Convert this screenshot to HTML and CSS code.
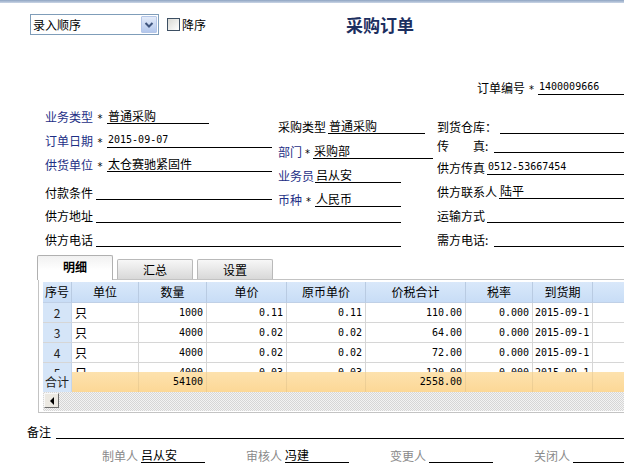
FILE: index.html
```html
<!DOCTYPE html>
<html lang="zh-CN">
<head>
<meta charset="utf-8">
<title>采购订单</title>
<link rel="stylesheet" href="styles.css">
</head>
<body>
<div class="topline"></div>

<div class="toolbar">
  <div class="combo">
    <span class="combo-text">录入顺序</span>
    <span class="combo-btn"><svg width="10" height="8" viewBox="0 0 10 8"><polyline points="1.5,2 5,5.5 8.5,2" fill="none" stroke="#3f557e" stroke-width="2"/></svg></span>
  </div>
  <div class="check"><span class="box"></span>降序</div>
  <h1 class="title">采购订单</h1>
</div>

<div class="order-row">
  <div class="field f-order"><span class="lbl">订单编号</span><span class="req">*</span><span class="val num">1400009666</span></div>
</div>

<div class="form-a">
  <div class="col col-left">
    <div class="field w164"><span class="lbl blue">业务类型</span><span class="req">*</span><span class="val">普通采购</span></div>
    <div class="field w227"><span class="lbl blue">订单日期</span><span class="req">*</span><span class="val num">2015-09-07</span></div>
    <div class="field w227"><span class="lbl blue">供货单位</span><span class="req">*</span><span class="val">太仓赛驰紧固件</span></div>
    <div class="field w227 gap-lg"><span class="lbl sp3">付款条件</span><span class="val"></span></div>
  </div>
  <div class="col col-mid">
    <div class="field w147"><span class="lbl sp2">采购类型</span><span class="val">普通采购</span></div>
    <div class="field w155 gap-md"><span class="lbl blue">部门</span><span class="req r11">*</span><span class="val">采购部</span></div>
    <div class="field w123"><span class="lbl blue sp1">业务员</span><span class="val">吕从安</span></div>
    <div class="field w123"><span class="lbl blue">币种</span><span class="req r13">*</span><span class="val">人民币</span></div>
  </div>
  <div class="col col-right">
    <div class="field w187"><span class="lbl sp3">到货仓库：</span><span class="val"></span></div>
    <div class="field w187 gap-xs"><span class="lbl lw57">传　　真:</span><span class="val"></span></div>
    <div class="field w187 gap-sm"><span class="lbl sp2">供方传真</span><span class="val num">0512-53667454</span></div>
    <div class="field w187"><span class="lbl sp2">供方联系人</span><span class="val">陆平</span></div>
  </div>
</div>

<div class="form-b">
  <div class="frow">
    <div class="field w356"><span class="lbl sp3">供方地址</span><span class="val"></span></div>
    <div class="field w187 right"><span class="lbl sp2">运输方式</span><span class="val"></span></div>
  </div>
  <div class="frow">
    <div class="field w356"><span class="lbl sp3">供方电话</span><span class="val"></span></div>
    <div class="field w187 right"><span class="lbl lw57">需方电话:</span><span class="val"></span></div>
  </div>
</div>

<div class="tabs">
  <div class="tab active">明细</div>
  <div class="tab">汇总</div>
  <div class="tab">设置</div>
</div>
<div class="panel">
  <div class="trow thead">
    <div class="c">序号</div><div class="c">单位</div><div class="c">数量</div><div class="c">单价</div><div class="c">原币单价</div><div class="c">价税合计</div><div class="c">税率</div><div class="c">到货期</div><div class="c"></div>
  </div>
  <div class="tbody">
    <div class="trow">
      <div class="c seq">2</div><div class="c l">只</div><div class="c r">1000</div><div class="c r">0.11</div><div class="c r">0.11</div><div class="c r">110.00</div><div class="c r">0.000</div><div class="c l num">2015-09-1</div><div class="c"></div>
    </div>
    <div class="trow">
      <div class="c seq">3</div><div class="c l">只</div><div class="c r">4000</div><div class="c r">0.02</div><div class="c r">0.02</div><div class="c r">64.00</div><div class="c r">0.000</div><div class="c l num">2015-09-1</div><div class="c"></div>
    </div>
    <div class="trow">
      <div class="c seq">4</div><div class="c l">只</div><div class="c r">4000</div><div class="c r">0.02</div><div class="c r">0.02</div><div class="c r">72.00</div><div class="c r">0.000</div><div class="c l num">2015-09-1</div><div class="c"></div>
    </div>
    <div class="trow">
      <div class="c seq">5</div><div class="c l">只</div><div class="c r">4000</div><div class="c r">0.03</div><div class="c r">0.03</div><div class="c r">120.00</div><div class="c r">0.000</div><div class="c l num">2015-09-1</div><div class="c"></div>
    </div>
  </div>
  <div class="trow ttotal">
    <div class="c seq">合计</div><div class="c"></div><div class="c r">54100</div><div class="c"></div><div class="c"></div><div class="c r">2558.00</div><div class="c"></div><div class="c"></div><div class="c"></div>
  </div>
  <div class="hscroll">
    <span class="arrow"><svg width="6" height="8" viewBox="0 0 6 8"><polygon points="5,0 5,8 1,4" fill="#000"/></svg></span>
  </div>
</div>

<div class="remark">
  <div class="field wfull"><span class="lbl sp5">备注</span><span class="val"></span></div>
</div>

<div class="signs">
  <div class="sign"><span class="slbl">制单人</span><span class="sval">吕从安</span></div>
  <div class="sign"><span class="slbl">审核人</span><span class="sval">冯建</span></div>
  <div class="sign"><span class="slbl">变更人</span><span class="sval"></span></div>
  <div class="sign"><span class="slbl">关闭人</span><span class="sval"></span></div>
</div>
</body>
</html>
```

FILE: styles.css
```css
* { box-sizing: border-box; }
html, body { margin: 0; }
body {
  width: 624px;
  height: 474px;
  overflow: hidden;
  background: #fff;
  color: #000;
  font: 12px "Noto Sans CJK SC", sans-serif;
}

.topline {
  height: 3px;
  background: linear-gradient(#8ea4c2, #cbd6e6);
}

/* toolbar */
.toolbar {
  display: flex;
  align-items: center;
  height: 21px;
  margin-top: 11px;
  padding-left: 30px;
}
.combo {
  display: flex;
  width: 129px;
  height: 21px;
  border: 1px solid #7f9db9;
  background: #fff;
}
.combo-text {
  flex: 1;
  padding-left: 2px;
  line-height: 19px;
}
.combo-btn {
  width: 16px;
  height: 17px;
  margin: 1px 1px 0 0;
  border: 1px solid #b4c6e8;
  border-radius: 1px;
  background: linear-gradient(#e3ebf9, #b3c7ec);
  display: flex;
  align-items: center;
  justify-content: center;
}
.check {
  display: flex;
  align-items: center;
  margin-left: 8px;
  line-height: 14px;
}
.box {
  width: 13px;
  height: 13px;
  margin-right: 2px;
  border: 1px solid #3d4f63;
  background: linear-gradient(135deg, #d9d9d4, #fff);
}
.title {
  margin: 0 0 0 140px;
  font-size: 17px;
  font-weight: bold;
  line-height: 21px;
  color: #1c2f5f;
}

/* generic underlined field */
.field {
  display: flex;
  align-items: flex-end;
  height: 15px;
  flex-shrink: 0;
}
.lbl {
  line-height: 14px;
  white-space: nowrap;
  flex-shrink: 0;
}
.blue { color: #1e2f86; }
.sp1 { margin-right: 1px; }
.sp2 { margin-right: 2px; }
.sp3 { margin-right: 3px; }
.sp5 { margin-right: 5px; }
.lw57 { width: 57px; }
.req {
  width: 14px;
  flex-shrink: 0;
  text-align: center;
  font: 10px "DejaVu Sans", sans-serif;
  line-height: 11px;
}
.r11 { width: 11px; }
.r13 { width: 13px; }
.val {
  flex: 1;
  height: 15px;
  border-bottom: 1px solid #000;
  line-height: 14px;
  padding-left: 1px;
  white-space: nowrap;
}
.num {
  font-family: "DejaVu Sans Mono", monospace;
  font-size: 10px;
}

.w123 { width: 123px; }
.w147 { width: 147px; }
.w155 { width: 155px; }
.w164 { width: 164px; }
.w187 { width: 187px; }
.w227 { width: 227px; }
.w356 { width: 356px; }

/* order number */
.order-row {
  margin-top: 45px;
  padding-left: 477px;
}
.f-order { width: 147px; }
.f-order .req { width: 13px; }

/* main form */
.form-a {
  display: flex;
  align-items: flex-start;
  margin-top: 14px;
  padding-left: 45px;
}
.col {
  display: flex;
  flex-direction: column;
  flex-shrink: 0;
}
.col-left { width: 227px; gap: 9px; }
.col-left .gap-lg { margin-top: 4px; }
.col-mid { width: 155px; margin-left: 6px; padding-top: 10px; gap: 9px; }
.col-mid .gap-md { margin-top: 1px; }
.col-right { width: 187px; margin-left: 4px; padding-top: 10px; gap: 4px; }
.col-right .gap-xs { margin-top: 0; }
.col-right .gap-sm { margin-top: 3px; }
.col-right .field:last-child { margin-top: 5px; }

.form-b {
  display: flex;
  flex-direction: column;
  gap: 9px;
  margin-top: 1px;
  padding-left: 45px;
}
.frow { display: flex; }
.frow .right { margin-left: 36px; }

/* tabs */
.tabs {
  display: flex;
  align-items: flex-end;
  gap: 4px;
  height: 24px;
  margin-top: 8px;
  padding-left: 37px;
}
.tab {
  width: 76px;
  height: 20px;
  border: 1px solid #b9b9b9;
  border-bottom: none;
  border-radius: 2px 2px 0 0;
  background: linear-gradient(#f7f7f7, #d8d8d8);
  text-align: center;
  line-height: 19px;
}
.tab.active {
  position: relative;
  z-index: 1;
  height: 25px;
  margin-bottom: -1px;
  border-color: #b0b0b0;
  background: linear-gradient(#f1f1f1, #fff 60%);
  font-weight: bold;
  line-height: 22px;
}

.panel {
  width: 640px;
  margin-left: 38px;
  padding: 2px 0 1px 4px;
  border: 1px solid #c3c3c3;
}
.trow {
  display: grid;
  grid-template-columns: 29px 67px 68px 80px 79px 100px 67px 60px 80px;
}
.c {
  height: 20px;
  border-right: 1px solid #d6d6d6;
  border-bottom: 1px solid #d6d6d6;
  line-height: 19px;
  white-space: nowrap;
  overflow: hidden;
}
.c.r {
  text-align: right;
  padding-right: 3px;
  font-family: "DejaVu Sans Mono", monospace;
  font-size: 10px;
}
.c.l { padding-left: 3px; }
.c.l.num { padding-left: 2px; }
.c.seq {
  text-align: center;
  background: #d5e5f8;
  color: #222;
  border-right-color: #c5d5ea;
}
.thead .c {
  height: 21px;
  line-height: 20px;
  text-align: center;
  background: linear-gradient(#d9e8fa, #c8ddf6);
  border-right-color: #b9cbe2;
  border-bottom-color: #c0d0e6;
}
.tbody {
  height: 69px;
  overflow: hidden;
}
.ttotal .c {
  border-bottom: none;
  border-right-color: rgba(0, 0, 0, 0.06);
  background: linear-gradient(#fde2ae, #fcd896);
}
.ttotal .c.seq {
  background: #d5e5f8;
  border-right-color: #c5d5ea;
}

.hscroll {
  height: 19px;
  padding: 1px 0 0 1px;
  background: repeating-conic-gradient(#d6d6d6 0 25%, #f3f3f3 0 50%) 0 0 / 2px 2px;
}
.arrow {
  display: flex;
  align-items: center;
  justify-content: center;
  width: 15px;
  height: 15px;
  border: 1px solid;
  border-color: #f8f8f8 #6e6e6e #6e6e6e #f8f8f8;
  background: #ece9e2;
}

/* footer */
.remark {
  margin-top: 11px;
  padding-left: 27px;
}
.wfull { width: 597px; }

.signs {
  display: flex;
  margin-top: 9px;
  padding-left: 102px;
}
.sign {
  display: flex;
  align-items: flex-end;
  flex-shrink: 0;
  width: 144px;
  height: 15px;
}
.slbl {
  width: 36px;
  margin-right: 3px;
  flex-shrink: 0;
  line-height: 14px;
  color: #8a8a8a;
}
.sval {
  width: 64px;
  flex-shrink: 0;
  height: 15px;
  border-bottom: 1px solid #000;
  line-height: 14px;
  white-space: nowrap;
}
.sign:last-child .sval { width: 60px; }
```
